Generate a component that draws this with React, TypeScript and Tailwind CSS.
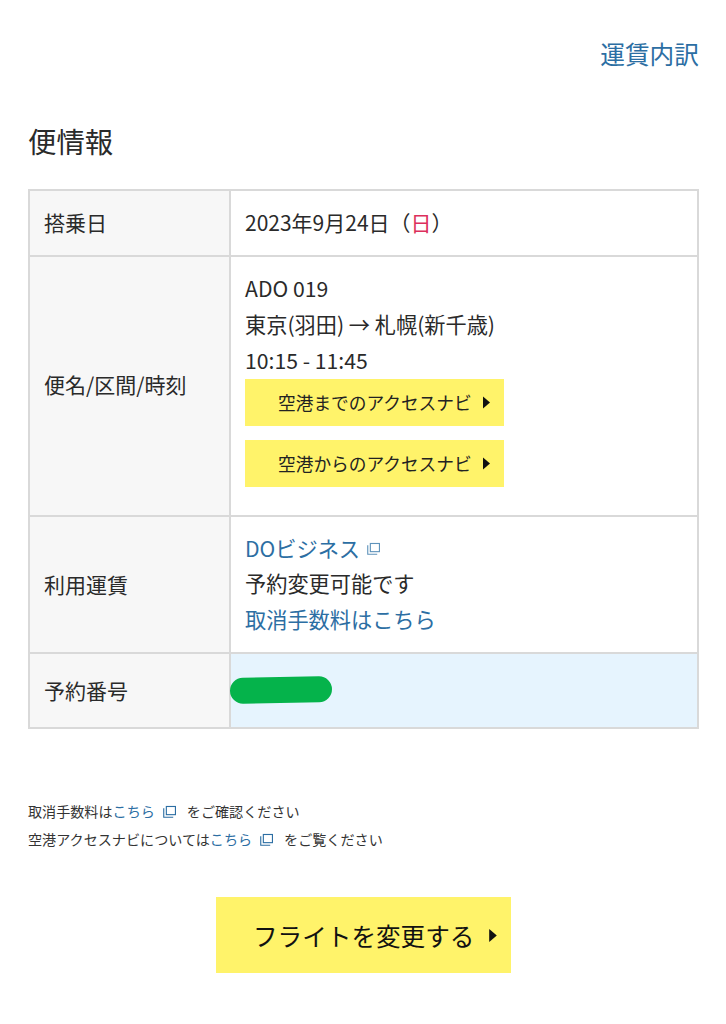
const font = '"Noto Sans CJK JP", "Noto Sans", sans-serif';

function ExternalIcon({ className }: { className: string }) {
  return (
    <svg viewBox="0 0 14 14" className={className} fill="none" stroke="currentColor" strokeWidth="1.2">
      <rect x="3.6" y="1.6" width="9.8" height="8.8" />
      <path d="M0.8 3.6V13.2H11" />
    </svg>
  );
}

function Arrow({ className }: { className: string }) {
  return (
    <svg viewBox="0 0 7 12" className={className} fill="#111">
      <path d="M0 0L7 6L0 12Z" />
    </svg>
  );
}

function NaviButton({ label }: { label: string }) {
  return (
    <a className="flex h-[47px] w-[259px] items-center bg-[#fff36a] pl-[33px] text-[17.7px] leading-none text-[#222]">
      <span>{label}</span>
      <Arrow className="ml-[11px] h-[13px] w-[7px]" />
    </a>
  );
}

function Row({ label, className, labelClass = '', children }: { label: string; className: string; labelClass?: string; children: React.ReactNode }) {
  return (
    <div className={`flex border-b-2 border-[#d9d9d9] last:border-b-0 ${className}`}>
      <div className={`flex w-[201px] shrink-0 items-center border-r-2 border-[#d9d9d9] bg-[#f7f7f7] pl-[14px] text-[21px] ${labelClass}`}>
        {label}
      </div>
      {children}
    </div>
  );
}

export default function App() {
  return (
    <div className="h-[1024px] w-[726px] overflow-hidden bg-white text-[#2a2a2a]" style={{ fontFamily: font }}>
      <div className="flex justify-end pr-[27px] pt-[35px]">
        <a className="text-[24.7px] leading-[36px] text-[#2c6ea3]">運賃内訳</a>
      </div>

      <h2 className="ml-[28px] mt-[50px] text-[28.4px] font-normal leading-[40px] text-[#2a2a2a]">便情報</h2>

      <div className="ml-[28px] mt-[28px] w-[671px] border-2 border-[#d9d9d9]">
        <Row label="搭乗日" className="h-[66px]">
          <div className="flex items-center pl-[14px] text-[21px]">
            2023年9月24日（<span className="text-[#dc2f5c]">日</span>）
          </div>
        </Row>

        <Row label="便名/区間/時刻" className="h-[260px]" labelClass="pb-[2px]">
          <div className="pl-[14px] pt-[13px] text-[21.2px] leading-[36px]">
            <p>ADO 019</p>
            <p>東京(羽田) → 札幌(新千歳)</p>
            <p>10:15 - 11:45</p>
            <div className="mt-px flex flex-col gap-[14px]">
              <NaviButton label="空港までのアクセスナビ" />
              <NaviButton label="空港からのアクセスナビ" />
            </div>
          </div>
        </Row>

        <Row label="利用運賃" className="h-[137px]">
          <div className="pl-[14px] pt-[13px] text-[21.2px] leading-[36px]">
            <p className="flex h-[35px] items-center text-[#2c6ea3]">
              DOビジネス
              <ExternalIcon className="ml-[7px] mt-[2px] h-[13px] w-[13px] text-[#5f93bb]" />
            </p>
            <p>予約変更可能です</p>
            <p className="text-[#2c6ea3]">取消手数料はこちら</p>
          </div>
        </Row>

        <Row label="予約番号" className="h-[73px]">
          <div className="relative flex-1 bg-[#e6f4fe]">
            <div className="absolute left-[-1px] top-[23px] h-[26px] w-[102px] -rotate-1 rounded-full bg-[#05b34b]" />
          </div>
        </Row>
      </div>

      <div className="ml-[28px] mt-[68px] text-[14.1px] leading-[28px] text-[#333]">
        <p className="flex items-center">
          取消手数料は<span className="text-[#2c6ea3]">こちら</span>
          <ExternalIcon className="ml-[8px] h-[13px] w-[13px] text-[#2c6ea3]" />
          <span className="ml-[11px]">をご確認ください</span>
        </p>
        <p className="flex items-center">
          空港アクセスナビについては<span className="text-[#2c6ea3]">こちら</span>
          <ExternalIcon className="ml-[8px] h-[13px] w-[13px] text-[#2c6ea3]" />
          <span className="ml-[11px]">をご覧ください</span>
        </p>
      </div>

      <div className="ml-[216px] mt-[44px]">
        <a className="flex h-[76px] w-[295px] items-center bg-[#fff36a] pl-[37px] text-[24.6px] leading-none text-[#111]">
          <span>フライトを変更する</span>
          <Arrow className="ml-[15px] h-[13px] w-[8px]" />
        </a>
      </div>
    </div>
  );
}
